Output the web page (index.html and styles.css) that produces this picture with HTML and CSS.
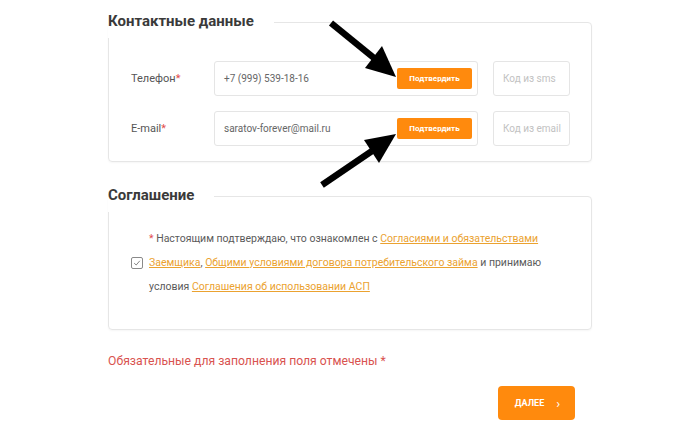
FILE: index.html
```html
<!DOCTYPE html>
<html lang="ru">
<head>
<meta charset="utf-8">
<link rel="stylesheet" href="styles.css">
</head>
<body>
<main class="page">
  <section class="box box-contacts">
    <h2 class="box-title">Контактные данные</h2>
    <div class="rows">
      <div class="row">
        <label class="label">Телефон<span class="req">*</span></label>
        <div class="field">
          <span class="value">+7 (999) 539-18-16</span>
          <button class="confirm">Подтвердить</button>
        </div>
        <div class="code">Код из sms</div>
      </div>
      <div class="row">
        <label class="label">E-mail<span class="req">*</span></label>
        <div class="field">
          <span class="value">saratov-forever@mail.ru</span>
          <button class="confirm">Подтвердить</button>
        </div>
        <div class="code">Код из email</div>
      </div>
    </div>
  </section>

  <section class="box box-agree">
    <h2 class="box-title">Соглашение</h2>
    <div class="agree">
      <span class="check">
        <svg width="8" height="8" viewBox="0 0 8 8"><path d="M1.2 4.2 L3.2 6 L6.8 1.8" fill="none" stroke="#777" stroke-width="0.9"/></svg>
      </span>
      <p class="agree-text"><span class="req">*</span> Настоящим подтверждаю, что ознакомлен с <a href="#">Согласиями и обязательствами</a><br><a href="#">Заемщика</a>, <a href="#">Общими условиями договора потребительского займа</a> и принимаю<br>условия <a href="#">Соглашения об использовании АСП</a></p>
    </div>
  </section>

  <p class="note">Обязательные для заполнения поля отмечены *</p>

  <div class="actions">
    <button class="next">ДАЛЕЕ <span class="chev">›</span></button>
  </div>
</main>

<svg class="arrows" width="700" height="437" viewBox="0 0 700 437">
  <line x1="331" y1="23" x2="374" y2="58" stroke="#000" stroke-width="6.5"/>
  <polygon points="396,77 365,68 382,46" fill="#000"/>
  <line x1="322" y1="185" x2="372" y2="151" stroke="#000" stroke-width="6.5"/>
  <polygon points="396,134 364,140 379,163" fill="#000"/>
</svg>
</body>
</html>
```

FILE: styles.css
```css
* { box-sizing: border-box; }
html, body { margin: 0; padding: 0; background: #fff; }
body {
  font-family: Roboto, "Noto Sans", Arial, sans-serif;
  color: #555;
  width: 700px;
  height: 437px;
  overflow: hidden;
  position: relative;
}
.page {
  width: 484px;
  margin: 0 0 0 108px;
  padding-top: 22px;
}
.box {
  border: 1px solid #e6e6e6;
  border-radius: 4px;
  box-shadow: 0 1px 2px rgba(0,0,0,0.04);
}
.box-title {
  margin: -11px 0 0 -23px;
  width: fit-content;
  background: #fff;
  font-size: 15px;
  line-height: 18px;
  font-weight: 700;
  color: #3a3a3a;
  padding: 0 20px 8px 0;
}
.box-contacts { padding: 0 21px 15px 22px; }
.rows {
  margin-top: 23px;
  display: flex;
  flex-direction: column;
  gap: 15px;
}
.row {
  display: flex;
  align-items: center;
  height: 35px;
}
.label {
  width: 83px;
  font-size: 11px;
  color: #555;
}
.req { color: #e24c4c; }
.field {
  width: 264px;
  height: 35px;
  border: 1px solid #e5e5e5;
  border-radius: 3px;
  display: flex;
  align-items: center;
  justify-content: space-between;
  padding: 0 5px 0 9px;
}
.value { font-size: 10px; color: #666; }
.confirm {
  width: 75px;
  height: 21px;
  border: 0;
  border-radius: 2px;
  background: #ff8a0d;
  color: #fff;
  font-family: Roboto, Arial, sans-serif;
  font-size: 8px;
  font-weight: 700;
  padding: 0;
}
.code {
  margin-left: 15px;
  width: 77px;
  height: 35px;
  border: 1px solid #e5e5e5;
  border-radius: 3px;
  display: flex;
  align-items: center;
  padding-left: 9px;
  font-size: 10px;
  color: #c2c2c2;
}
.box-agree {
  margin-top: 34px;
  padding: 0 20px 30px 22px;
}
.agree {
  margin-top: 15px;
  display: flex;
  align-items: center;
}
.check {
  width: 12px;
  height: 12px;
  border: 1px solid #8a8a8a;
  border-radius: 2px;
  display: flex;
  align-items: center;
  justify-content: center;
  margin-right: 6px;
  flex: none;
}
.agree-text {
  margin: 0;
  font-size: 10.5px;
  line-height: 24px;
  color: #5a5a5a;
  white-space: nowrap;
}
.agree-text a {
  color: #eba230;
  text-decoration: underline;
}
.note {
  margin: 23px 0 0 0;
  font-size: 12.2px;
  line-height: 16px;
  color: #d9534f;
}
.actions {
  display: flex;
  justify-content: flex-end;
  margin-top: 17px;
  padding-right: 17px;
}
.next {
  width: 77px;
  height: 34px;
  border: 0;
  border-radius: 4px;
  background: #ff8a0d;
  color: #fff;
  font-family: Roboto, Arial, sans-serif;
  font-size: 9px;
  font-weight: 700;
  padding: 0 0 0 2px;
  display: flex;
  align-items: center;
  justify-content: center;
  gap: 12px;
}
.chev { font-size: 13px; font-weight: 400; line-height: 1; }
.arrows {
  position: absolute;
  left: 0;
  top: 0;
  pointer-events: none;
}
```
